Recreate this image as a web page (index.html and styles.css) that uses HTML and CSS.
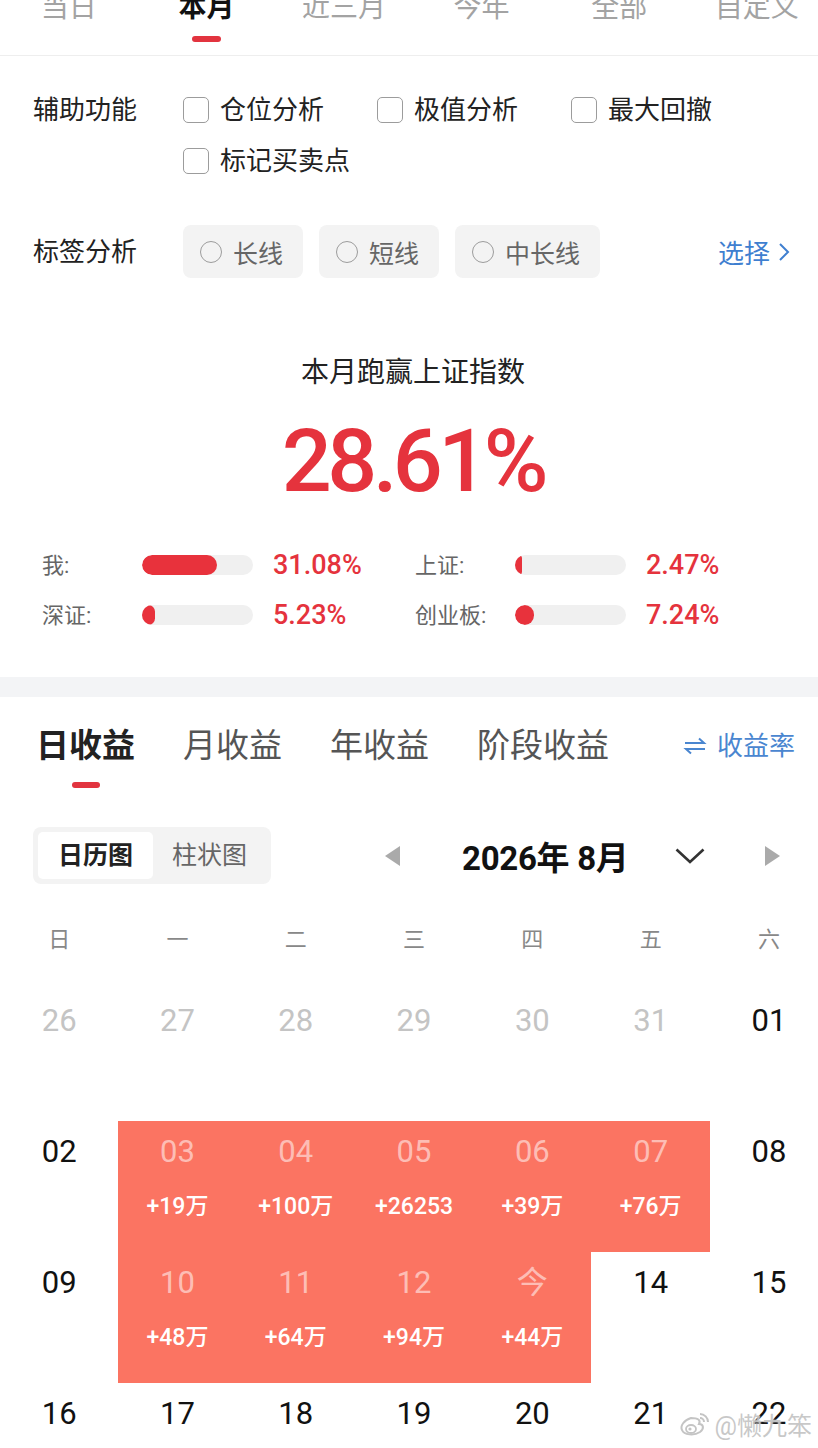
FILE: index.html
```html
<!DOCTYPE html>
<html lang="zh-CN">
<head>
    <meta charset="UTF-8">
    <meta name="viewport" content="width=device-width, initial-scale=1.0">
    <title>收益分析</title>
    <link rel="stylesheet" href="styles.css">
</head>
<body>

    <div class="top-tabs">
        <div class="top-tab">当日</div>
        <div class="top-tab active">本月<span class="tab-bar"></span></div>
        <div class="top-tab">近三月</div>
        <div class="top-tab">今年</div>
        <div class="top-tab">全部</div>
        <div class="top-tab">自定义</div>
    </div>

    <div class="options">
        <div class="opt-label">辅助功能</div>
        <div class="opt-grid">
            <div class="check"><span class="box"></span>仓位分析</div>
            <div class="check"><span class="box"></span>极值分析</div>
            <div class="check"><span class="box"></span>最大回撤</div>
            <div class="check"><span class="box"></span>标记买卖点</div>
        </div>
    </div>

    <div class="tags">
        <div class="opt-label">标签分析</div>
        <div class="pill"><span class="radio"></span>长线</div>
        <div class="pill"><span class="radio"></span>短线</div>
        <div class="pill"><span class="radio"></span>中长线</div>
        <div class="pick">选择
            <svg width="12" height="20" viewBox="0 0 12 20"><polyline points="2,2 10,10 2,18" fill="none" stroke="#3f7fd0" stroke-width="2"/></svg>
        </div>
    </div>

    <div class="summary">
        <div class="summary-title">本月跑赢上证指数</div>
        <div class="summary-value">28.61%</div>
    </div>

    <div class="compare">
        <div class="stat"><span class="stat-label">我:</span><span class="track"><span class="fill" style="width:68%"></span></span><span class="stat-value">31.08%</span></div>
        <div class="stat"><span class="stat-label">上证:</span><span class="track"><span class="fill" style="width:6%"></span></span><span class="stat-value">2.47%</span></div>
        <div class="stat"><span class="stat-label">深证:</span><span class="track"><span class="fill" style="width:12%"></span></span><span class="stat-value">5.23%</span></div>
        <div class="stat"><span class="stat-label">创业板:</span><span class="track"><span class="fill" style="width:17%"></span></span><span class="stat-value">7.24%</span></div>
    </div>

    <div class="band"></div>

    <div class="income-tabs">
        <div class="income-tab active">日收益<span class="tab-bar"></span></div>
        <div class="income-tab">月收益</div>
        <div class="income-tab">年收益</div>
        <div class="income-tab">阶段收益</div>
        <div class="rate-switch">
            <svg width="24" height="18" viewBox="0 0 24 18"><path d="M2 6 H21 L16 1.5 M22 12 H3 L8 16.5" fill="none" stroke="#4a86d0" stroke-width="2"/></svg>
            收益率
        </div>
    </div>

    <div class="cal-head">
        <div class="view-switch">
            <span class="view active">日历图</span>
            <span class="view">柱状图</span>
        </div>
        <svg class="tri-left" width="15" height="20" viewBox="0 0 15 20"><polygon points="15,0 0,10 15,20" fill="#aaaaaa"/></svg>
        <div class="month-title">2026年 8月</div>
        <svg class="chev" width="30" height="16" viewBox="0 0 30 16"><polyline points="1.5,1.5 15,14 28.5,1.5" fill="none" stroke="#333" stroke-width="2.6"/></svg>
        <svg class="tri-right" width="15" height="20" viewBox="0 0 15 20"><polygon points="0,0 15,10 0,20" fill="#aaaaaa"/></svg>
    </div>

    <div class="weekdays">
        <span>日</span><span>一</span><span>二</span><span>三</span><span>四</span><span>五</span><span>六</span>
    </div>

    <div class="days">
        <div class="day other"><span class="num">26</span></div>
        <div class="day other"><span class="num">27</span></div>
        <div class="day other"><span class="num">28</span></div>
        <div class="day other"><span class="num">29</span></div>
        <div class="day other"><span class="num">30</span></div>
        <div class="day other"><span class="num">31</span></div>
        <div class="day"><span class="num">01</span></div>

        <div class="day"><span class="num">02</span></div>
        <div class="day up"><span class="num">03</span><span class="amt">+19万</span></div>
        <div class="day up"><span class="num">04</span><span class="amt">+100万</span></div>
        <div class="day up"><span class="num">05</span><span class="amt">+26253</span></div>
        <div class="day up"><span class="num">06</span><span class="amt">+39万</span></div>
        <div class="day up"><span class="num">07</span><span class="amt">+76万</span></div>
        <div class="day"><span class="num">08</span></div>

        <div class="day"><span class="num">09</span></div>
        <div class="day up"><span class="num">10</span><span class="amt">+48万</span></div>
        <div class="day up"><span class="num">11</span><span class="amt">+64万</span></div>
        <div class="day up"><span class="num">12</span><span class="amt">+94万</span></div>
        <div class="day up"><span class="num">今</span><span class="amt">+44万</span></div>
        <div class="day"><span class="num">14</span></div>
        <div class="day"><span class="num">15</span></div>

        <div class="day"><span class="num">16</span></div>
        <div class="day"><span class="num">17</span></div>
        <div class="day"><span class="num">18</span></div>
        <div class="day"><span class="num">19</span></div>
        <div class="day"><span class="num">20</span></div>
        <div class="day"><span class="num">21</span></div>
        <div class="day"><span class="num">22</span></div>
    </div>

    <div class="watermark">
        <svg width="32" height="26" viewBox="0 0 32 26">
            <path d="M12 7 C5 9 1 15 3 19 C5 24 15 25 21 21 C26 17 24 13 20 13 C22 9 19 7 12 7Z" fill="none" stroke="#c4c4c4" stroke-width="2"/>
            <ellipse cx="12" cy="18" rx="5" ry="4" fill="none" stroke="#c4c4c4" stroke-width="1.8"/>
            <circle cx="11" cy="18" r="1.6" fill="#c4c4c4"/>
            <path d="M21 3 A8 8 0 0 1 29 11" fill="none" stroke="#c4c4c4" stroke-width="2"/>
            <path d="M21 7 A4 4 0 0 1 25 11" fill="none" stroke="#c4c4c4" stroke-width="2"/>
        </svg>
        <span>@懒九笨</span>
    </div>

</body>
</html>
```

FILE: styles.css
```css
body {
    margin: 0;
    width: 818px;
    height: 1448px;
    overflow: hidden;
    position: relative;
    background: #fff;
    color: #222;
    font-family: Roboto, "Noto Sans CJK SC", sans-serif;
}

/* period tabs */
.top-tabs {
    display: flex;
    height: 62px;
    margin-top: -6px;
    box-sizing: border-box;
    border-bottom: 1px solid #eeeeee;
}
.top-tab {
    flex: 0 0 137.6px;
    text-align: center;
    font-size: 28px;
    line-height: 28px;
    color: #a3a3a3;
}
.top-tab.active {
    color: #111;
    font-weight: bold;
}
.tab-bar {
    display: block;
    width: 29px;
    height: 6px;
    margin: 14px auto 0;
    border-radius: 3px;
    background: #e2343f;
}

/* options */
.options {
    display: flex;
    padding: 36px 0 0 33px;
}
.opt-label {
    width: 150px;
    flex: none;
    font-size: 26px;
    line-height: 36px;
    color: #222;
}
.opt-grid {
    display: grid;
    grid-template-columns: repeat(3, 194px);
    row-gap: 15px;
}
.check {
    display: flex;
    align-items: center;
    gap: 11px;
    font-size: 26px;
    line-height: 36px;
    color: #222;
}
.box {
    width: 26px;
    height: 26px;
    box-sizing: border-box;
    border: 1.5px solid #9c9c9c;
    border-radius: 5px;
}

.tags {
    display: flex;
    align-items: center;
    padding: 46px 28px 0 33px;
}
.pill {
    display: flex;
    align-items: center;
    gap: 11px;
    height: 53px;
    padding: 0 20px 0 17px;
    margin-right: 16px;
    border-radius: 8px;
    background: #f3f3f3;
    font-size: 25px;
    color: #666;
}
.radio {
    width: 22px;
    height: 22px;
    box-sizing: border-box;
    border: 1.5px solid #9c9c9c;
    border-radius: 50%;
}
.pick {
    margin-left: auto;
    display: flex;
    align-items: center;
    gap: 8px;
    font-size: 26px;
    color: #3f7fd0;
}

/* summary */
.summary {
    text-align: center;
    padding-top: 75px;
    padding-left: 8px;
}
.summary-title {
    font-size: 28px;
    line-height: 40px;
    color: #222;
}
.summary-value {
    margin-top: 18px;
    font-size: 88px;
    line-height: 100px;
    font-weight: 500;
    letter-spacing: -4.5px;
    color: #e5333d;
}

.compare {
    display: grid;
    grid-template-columns: 373px 1fr;
    padding-left: 42px;
    margin-top: 29px;
}
.stat {
    display: flex;
    align-items: center;
    height: 50px;
}
.stat-label {
    width: 100px;
    margin-top: -4px;
    font-size: 22px;
    color: #666;
}
.track {
    width: 111px;
    height: 20px;
    border-radius: 10px;
    background: #f0f0f0;
    overflow: hidden;
}
.fill {
    display: block;
    height: 100%;
    border-radius: 10px;
    background: #e8323c;
}
.stat-value {
    margin-left: 20px;
    font-size: 27px;
    font-weight: 500;
    color: #e5333d;
}

.band {
    height: 20px;
    margin-top: 37px;
    background: #f3f4f6;
}

/* income tabs */
.income-tabs {
    display: flex;
    align-items: flex-start;
    padding: 27px 23px 0 36px;
}
.income-tab {
    margin-right: 48px;
    font-size: 33px;
    line-height: 44px;
    color: #555;
}
.income-tab.active {
    color: #222;
    font-weight: bold;
}
.income-tab .tab-bar {
    width: 28px;
}
.rate-switch {
    margin-left: auto;
    display: flex;
    align-items: center;
    gap: 10px;
    font-size: 26px;
    line-height: 44px;
    color: #4a86d0;
}

/* calendar */
.cal-head {
    display: flex;
    align-items: center;
    padding: 39px 0 0 33px;
}
.view-switch {
    display: flex;
    height: 57px;
    padding: 5px;
    box-sizing: border-box;
    border-radius: 8px;
    background: #f3f3f3;
}
.view {
    width: 113px;
    line-height: 47px;
    text-align: center;
    font-size: 25px;
    color: #666;
    border-radius: 5px;
}
.view.active {
    width: 115px;
    background: #fff;
    color: #222;
    font-weight: bold;
}
.tri-left {
    margin-left: 114px;
}
.month-title {
    width: 213px;
    margin-left: 62px;
    font-size: 33px;
    font-weight: bold;
    letter-spacing: -0.3px;
    color: #111;
}
.chev {
    margin-right: 60px;
}

.weekdays {
    display: grid;
    grid-template-columns: repeat(7, 118.3px);
    margin-top: 36px;
    font-size: 22px;
    line-height: 40px;
    text-align: center;
    color: #888;
}
.days {
    display: grid;
    grid-template-columns: repeat(7, 118.3px);
    margin-top: 30px;
}
.day {
    height: 131px;
    padding-top: 11px;
    box-sizing: border-box;
    text-align: center;
}
.num {
    display: block;
    font-size: 31px;
    line-height: 40px;
    color: #111;
}
.day.other .num {
    color: #c4c4c4;
}
.day.up {
    background: #fb7462;
}
.day.up .num {
    color: rgba(255, 255, 255, 0.55);
}
.amt {
    display: block;
    margin-top: 20px;
    font-size: 23px;
    line-height: 30px;
    font-weight: 500;
    color: #fff;
}

.watermark {
    position: absolute;
    right: 6px;
    bottom: 6px;
    display: flex;
    align-items: center;
    gap: 4px;
    font-size: 25px;
    color: rgba(190, 190, 190, 0.85);
    text-shadow: 0 0 2px #fff;
}
```
